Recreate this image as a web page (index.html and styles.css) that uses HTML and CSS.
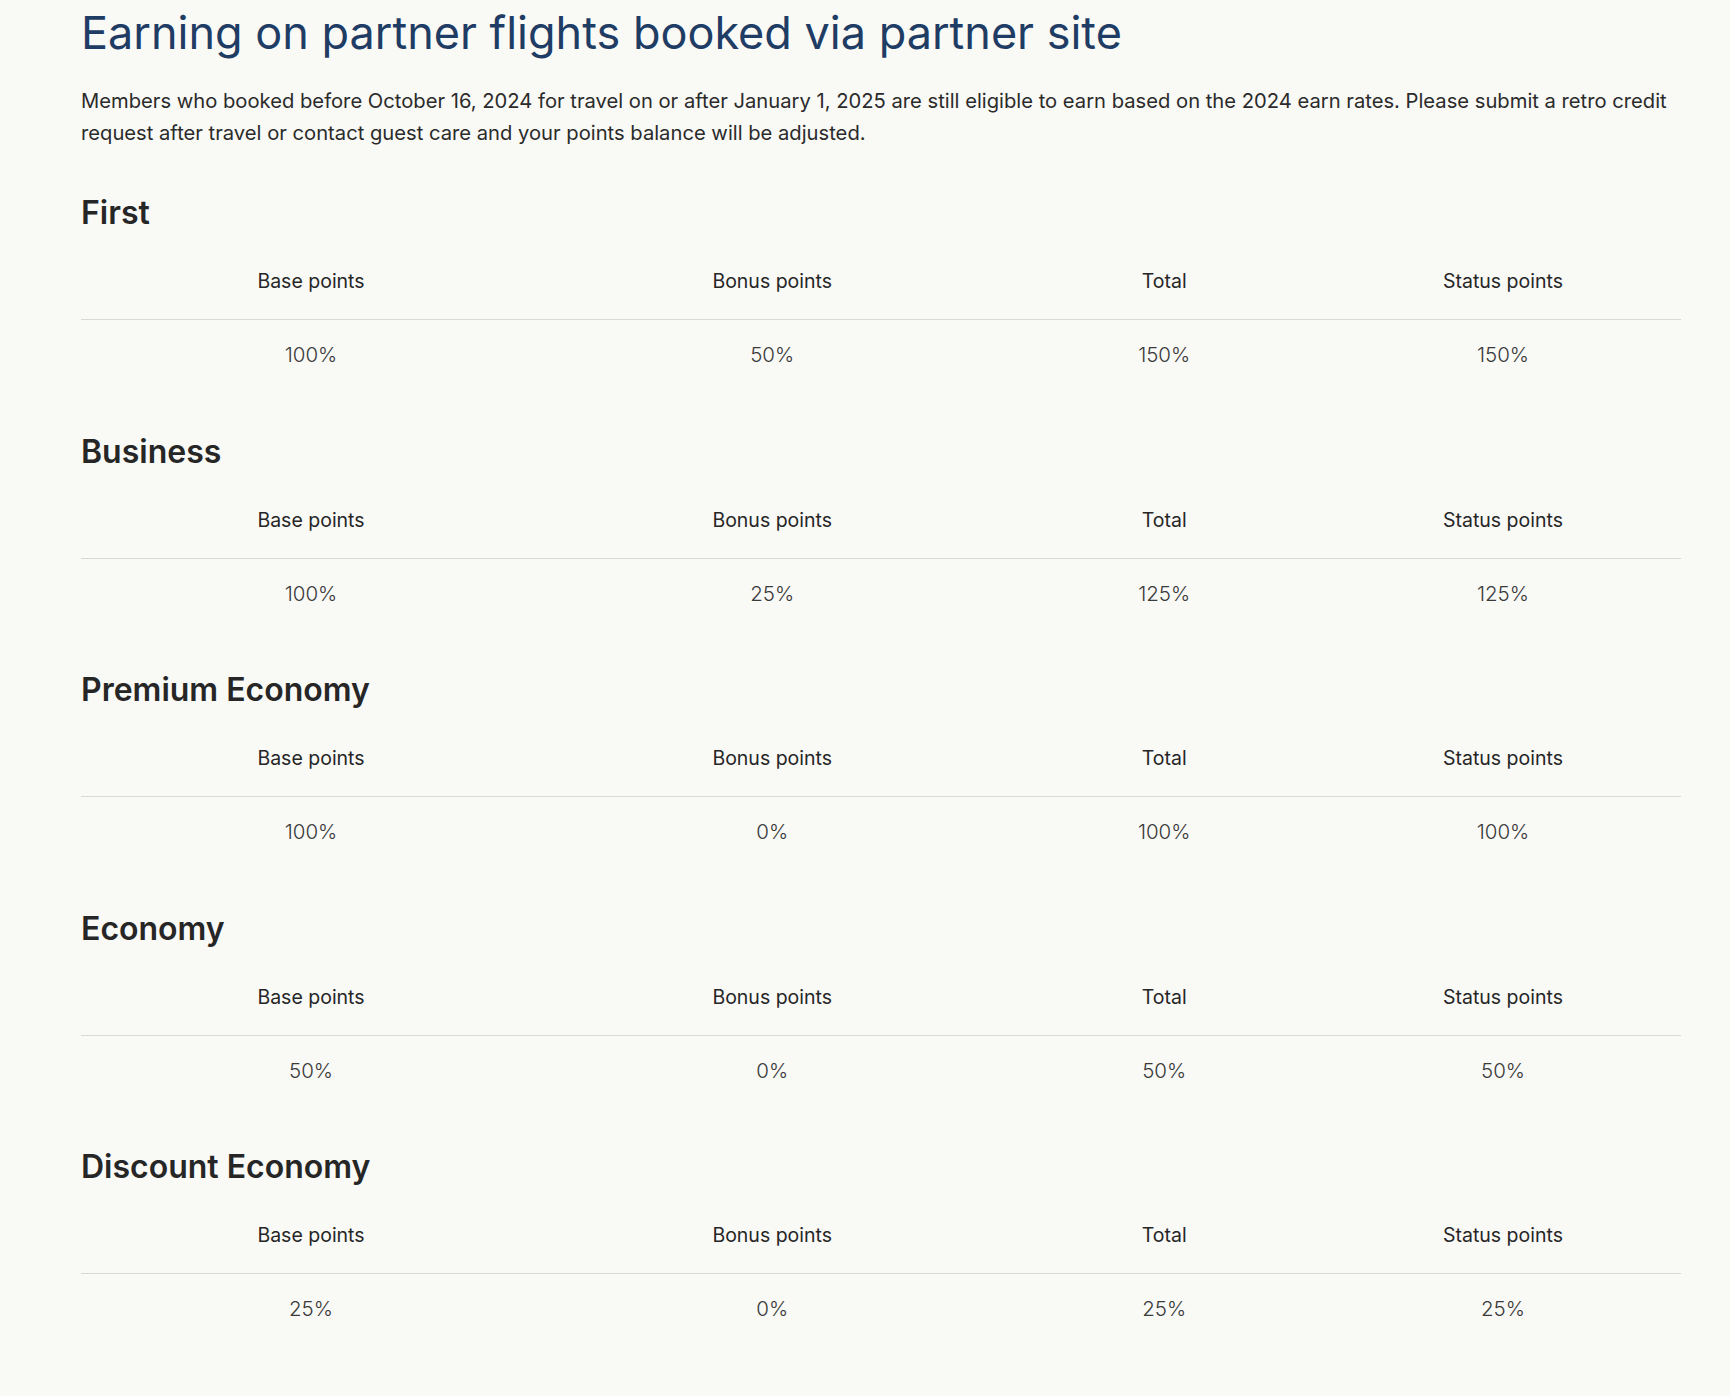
FILE: index.html
```html
<!DOCTYPE html>
<html lang="en">
<head>
<meta charset="utf-8">
<title>Earning on partner flights booked via partner site</title>
<link rel="stylesheet" href="styles.css">
</head>
<body>
<main class="page">
  <h1 class="title">Earning on partner flights booked via partner site</h1>
  <p class="intro">Members who booked before October 16, 2024 for travel on or after January 1, 2025 are still eligible to earn based on the 2024 earn rates. Please submit a retro credit request after travel or contact guest care and your points balance will be adjusted.</p>

  <section class="fare">
    <h2 class="fare-name">First</h2>
    <table class="earn">
      <colgroup><col class="c1"><col class="c2"><col class="c3"><col class="c4"></colgroup>
      <thead><tr><th>Base points</th><th>Bonus points</th><th>Total</th><th>Status points</th></tr></thead>
      <tbody><tr><td>100%</td><td>50%</td><td>150%</td><td>150%</td></tr></tbody>
    </table>
  </section>

  <section class="fare">
    <h2 class="fare-name">Business</h2>
    <table class="earn">
      <colgroup><col class="c1"><col class="c2"><col class="c3"><col class="c4"></colgroup>
      <thead><tr><th>Base points</th><th>Bonus points</th><th>Total</th><th>Status points</th></tr></thead>
      <tbody><tr><td>100%</td><td>25%</td><td>125%</td><td>125%</td></tr></tbody>
    </table>
  </section>

  <section class="fare">
    <h2 class="fare-name">Premium Economy</h2>
    <table class="earn">
      <colgroup><col class="c1"><col class="c2"><col class="c3"><col class="c4"></colgroup>
      <thead><tr><th>Base points</th><th>Bonus points</th><th>Total</th><th>Status points</th></tr></thead>
      <tbody><tr><td>100%</td><td>0%</td><td>100%</td><td>100%</td></tr></tbody>
    </table>
  </section>

  <section class="fare">
    <h2 class="fare-name">Economy</h2>
    <table class="earn">
      <colgroup><col class="c1"><col class="c2"><col class="c3"><col class="c4"></colgroup>
      <thead><tr><th>Base points</th><th>Bonus points</th><th>Total</th><th>Status points</th></tr></thead>
      <tbody><tr><td>50%</td><td>0%</td><td>50%</td><td>50%</td></tr></tbody>
    </table>
  </section>

  <section class="fare">
    <h2 class="fare-name">Discount Economy</h2>
    <table class="earn">
      <colgroup><col class="c1"><col class="c2"><col class="c3"><col class="c4"></colgroup>
      <thead><tr><th>Base points</th><th>Bonus points</th><th>Total</th><th>Status points</th></tr></thead>
      <tbody><tr><td>25%</td><td>0%</td><td>25%</td><td>25%</td></tr></tbody>
    </table>
  </section>
</main>
</body>
</html>
```

FILE: styles.css
```css
html, body {
  margin: 0;
  padding: 0;
  background: #f9f9f6;
}

body {
  font-family: Inter, "Liberation Sans", sans-serif;
  color: #2b2b2b;
}

.page {
  width: 1600px;
  padding: 7px 0 40px 81px;
}

.title {
  margin: 0;
  font-size: 45px;
  line-height: 52px;
  font-weight: 400;
  color: #1f3d64;
}

.intro {
  margin: 26px 0 0;
  font-size: 20.2px;
  line-height: 32px;
  color: #2b2b2b;
}

.fare {
  margin-top: 44px;
}

.fare + .fare {
  margin-top: 40.5px;
}

.fare-name {
  margin: 0;
  font-size: 32px;
  line-height: 40px;
  font-weight: 600;
  color: #262626;
}

.earn {
  width: 100%;
  border-collapse: collapse;
  table-layout: fixed;
}

.c1 { width: 28.75%; }
.c2 { width: 28.9%; }
.c3 { width: 20.1%; }
.c4 { width: 22.25%; }

.earn th {
  padding: 36px 0 26px;
  font-size: 19.5px;
  line-height: 24px;
  font-weight: 400;
  color: #262626;
  text-align: center;
  border-bottom: 1px solid #d9d9d6;
}

.earn td {
  padding: 23px 0 24px;
  font-size: 20.5px;
  line-height: 24px;
  font-weight: 300;
  color: #3a3a3a;
  text-align: center;
}
```
